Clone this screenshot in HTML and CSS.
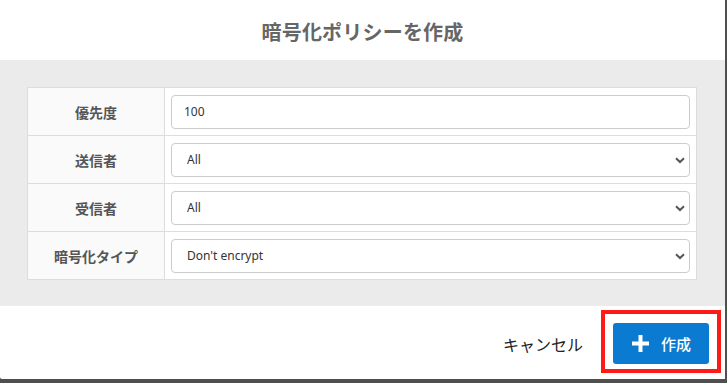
FILE: index.html
```html
<!DOCTYPE html>
<html lang="ja">
<head>
<meta charset="utf-8">
<title>暗号化ポリシーを作成</title>
<link rel="stylesheet" href="styles.css">
</head>
<body>
<div class="modal">
  <header class="modal-header">
    <h1 class="modal-title">暗号化ポリシーを作成</h1>
  </header>
  <section class="modal-body">
    <table class="form-table">
      <tr>
        <th>優先度</th>
        <td><input class="field" type="text" value="100"></td>
      </tr>
      <tr>
        <th>送信者</th>
        <td>
          <div class="select-wrap">
            <select class="field select"><option>All</option></select>
            <svg class="chevron" width="10" height="7" viewBox="0 0 10 7"><path d="M1 1.2 L5 5 L9 1.2" fill="none" stroke="#555" stroke-width="2"/></svg>
          </div>
        </td>
      </tr>
      <tr>
        <th>受信者</th>
        <td>
          <div class="select-wrap">
            <select class="field select"><option>All</option></select>
            <svg class="chevron" width="10" height="7" viewBox="0 0 10 7"><path d="M1 1.2 L5 5 L9 1.2" fill="none" stroke="#555" stroke-width="2"/></svg>
          </div>
        </td>
      </tr>
      <tr>
        <th>暗号化タイプ</th>
        <td>
          <div class="select-wrap">
            <select class="field select"><option>Don't encrypt</option></select>
            <svg class="chevron" width="10" height="7" viewBox="0 0 10 7"><path d="M1 1.2 L5 5 L9 1.2" fill="none" stroke="#555" stroke-width="2"/></svg>
          </div>
        </td>
      </tr>
    </table>
  </section>
  <footer class="modal-footer">
    <span class="cancel">キャンセル</span>
    <div class="create-wrap">
      <button class="create-btn" type="button">
        <svg class="plus" width="17" height="17" viewBox="0 0 17 17"><path d="M8.5 0 V17 M0 8.5 H17" stroke="#fff" stroke-width="4"/></svg>
        <span>作成</span>
      </button>
      <div class="highlight"></div>
    </div>
  </footer>
</div>
</body>
</html>
```
FILE: styles.css
```css
html, body {
  margin: 0;
  padding: 0;
}
body {
  background: #4f4f4f;
  width: 727px;
  height: 383px;
  overflow: hidden;
  font-family: "Noto Sans CJK JP", "Noto Sans", sans-serif;
}
.modal {
  width: 725px;
  height: 379px;
  background: #fff;
  display: flex;
  flex-direction: column;
  border-bottom-left-radius: 2px;
}
.modal-header {
  height: 60px;
  display: flex;
  align-items: center;
  justify-content: center;
}
.modal-title {
  margin: 0;
  font-size: 20px;
  font-weight: 700;
  color: #666;
  letter-spacing: 0.2px;
  padding-top: 3px;
}
.modal-body {
  background: #ebebeb;
  height: 246px;
  box-sizing: border-box;
  padding: 27px 28px 0 27px;
}
.form-table {
  width: 100%;
  border-collapse: collapse;
  background: #fff;
}
.form-table th,
.form-table td {
  border: 1px solid #dddddd;
  height: 48px;
  box-sizing: border-box;
}
.form-table th {
  width: 137px;
  background: #fafafa;
  font-size: 14px;
  font-weight: 700;
  color: #555;
  text-align: center;
  padding: 0;
}
.form-table td {
  padding: 0 6px;
  background: #fff;
}
.field {
  display: block;
  width: 100%;
  height: 34px;
  box-sizing: border-box;
  border: 1px solid #cccccc;
  border-radius: 4px;
  background: #fff;
  font-family: "Noto Sans", sans-serif;
  font-size: 12px;
  color: #333;
  padding: 0 12px;
  margin: 0;
  outline: none;
}
.select-wrap {
  position: relative;
}
.select {
  -webkit-appearance: none;
  appearance: none;
  padding-left: 15px;
}
.chevron {
  position: absolute;
  right: 5px;
  top: 14px;
  pointer-events: none;
}
.modal-footer {
  flex: 1;
  display: flex;
  align-items: center;
  justify-content: flex-end;
  padding-right: 16px;
}
.cancel {
  font-size: 16px;
  color: #222;
  margin-right: 30px;
  padding-top: 3px;
}
.create-wrap {
  position: relative;
}
.create-btn {
  width: 96px;
  height: 41px;
  border: none;
  border-radius: 3px;
  background: #0a7bd0;
  color: #fff;
  display: flex;
  align-items: center;
  padding: 0 0 0 19px;
  font-family: "Noto Sans CJK JP", sans-serif;
  font-size: 15px;
  font-weight: 500;
  gap: 12px;
  margin-top: 1px;
}
.plus {
  display: block;
  flex: none;
}
.highlight {
  position: absolute;
  left: -12px;
  right: -12px;
  top: -12px;
  bottom: -9px;
  border: 4px solid #ff1a1a;
  pointer-events: none;
}
```
